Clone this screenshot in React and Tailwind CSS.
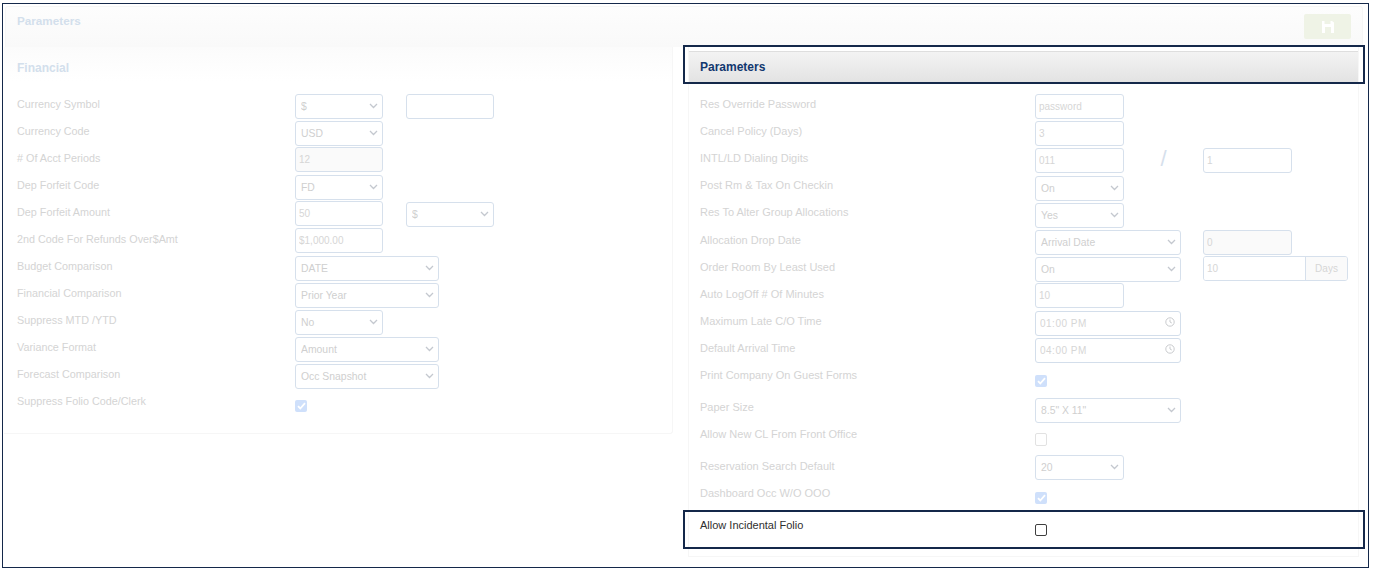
import React from "react";

const Chevron = () => (
  <svg className="absolute right-[5px] top-[10px] pointer-events-none" width="9" height="6" viewBox="0 0 9 6" fill="none" stroke="#c4c8cf" strokeWidth="1.3">
    <path d="M1 1l3.5 3.5L8 1" />
  </svg>
);

const Clock = () => (
  <svg className="absolute right-[6px] top-[7px]" width="10" height="10" viewBox="0 0 10 10" fill="none" stroke="#c9cbce" strokeWidth="1">
    <circle cx="5" cy="5" r="4.2" />
    <path d="M5 2.5V5l1.8 1" />
  </svg>
);

const Select = ({ value, w }) => (
  <div className={`relative shrink-0 h-[25px] ${w}`}>
    <select
      defaultValue={value}
      className="w-full h-full appearance-none rounded-[3px] border border-[#d6e0ec] bg-white pl-[5px] text-[10.4px] text-[#cfcfcf] outline-none"
    >
      <option>{value}</option>
    </select>
    <Chevron />
  </div>
);

const Input = ({ value, w, disabled, grey }) => (
  <input
    readOnly
    disabled={disabled}
    value={value || ""}
    className={`shrink-0 h-[25px] ${w} rounded-[3px] border border-[#d6e0ec] ${grey ? "bg-[#fafafa]" : "bg-white"} pl-[3px] text-[10px] text-[#d6d6d6] outline-none`}
  />
);

const Time = ({ value }) => (
  <div className="relative shrink-0 h-[25px] w-[146px]">
    <input
      readOnly
      value={value}
      className="w-full h-full rounded-[3px] border border-[#d3deeb] bg-white pl-[4px] text-[10px] tracking-[0.5px] text-[#d6d6d6] outline-none"
    />
    <Clock />
  </div>
);

const Check = ({ on, mt }) =>
  on ? (
    <span className={`flex items-center justify-center shrink-0 w-[12px] h-[12px] rounded-[2px] bg-[#cfe0fb] ${mt}`}>
      <svg width="9" height="8" viewBox="0 0 9 8" fill="none" stroke="#fff" strokeWidth="1.8">
        <path d="M1 4.2l2.3 2.3L8 1.2" />
      </svg>
    </span>
  ) : (
    <span className={`block shrink-0 w-[12px] h-[13px] rounded-[2px] border border-[#e2e2e2] bg-white ${mt}`} />
  );

const Row = ({ label, h = "h-[27px]", lt = "mt-[3px]", labelW, size = "text-[11px]", children, dark }) => (
  <div className={`flex items-start ${h}`}>
    <div className={`shrink-0 ${labelW} ${lt} ${size} leading-[14px] ${dark ? "text-[#2f2f2f]" : "text-[#d4d4d4]"}`}>
      {label}
    </div>
    {children}
  </div>
);

const LRow = (props) => <Row labelW="w-[278px]" lt="mt-[4px]" size="text-[10.8px]" {...props} />;
const RRow = (props) => <Row labelW="w-[335px]" {...props} />;

export default function App() {
  return (
    <div className="w-[1373px] h-[572px] bg-white pl-[2px] pt-[3px] font-['Liberation_Sans',Arial,sans-serif] overflow-hidden">
      <div className="relative w-[1367px] h-[565px] border border-[#14284a] pl-[2px] pt-[2px]">
        <div className="flex justify-between w-[1358px] h-[41px] rounded-t-[3px] border border-b-0 border-[#f6f6f6] bg-gradient-to-b from-[#fdfdfd] to-[#f9f9f9]">
          <span className="ml-[11px] mt-[7px] text-[11.7px] leading-[14px] font-bold text-[#d3dfec]">Parameters</span>
          <button className="flex items-center justify-center mt-[7px] mr-[11px] w-[47px] h-[25px] rounded-[2px] bg-[#eff3e6]">
            <svg width="12" height="12" viewBox="0 0 12 12" fill="#fff">
              <path d="M0 0h2.5v3h6V0H10l2 1.5V12H9V6H3v6H0z" />
            </svg>
          </button>
        </div>

        <div className="flex items-start">
          <section className="w-[669px] -ml-[1px] h-[387px] border-b border-r border-[#f6f6f6] rounded-br-[3px]">
            <h2 className="h-[34px] pl-[13px] pt-[14px] text-[12px] leading-[14px] font-bold text-[#d3dfec] bg-gradient-to-b from-[#fbfbfb] to-white">
              Financial
            </h2>
            <div className="pl-[13px] pt-[12px]">
              <LRow label="Currency Symbol">
                <Select value="$" w="w-[88px]" />
                <div className="ml-[23px]"><Input w="w-[88px]" /></div>
              </LRow>
              <LRow label="Currency Code"><Select value="USD" w="w-[88px]" /></LRow>
              <LRow label="# Of Acct Periods"><Input value="12" w="w-[88px]" grey /></LRow>
              <LRow label="Dep Forfeit Code"><Select value="FD" w="w-[88px]" /></LRow>
              <LRow label="Dep Forfeit Amount">
                <Input value="50" w="w-[88px]" />
                <div className="ml-[23px]"><Select value="$" w="w-[88px]" /></div>
              </LRow>
              <LRow label="2nd Code For Refunds Over$Amt"><Input value="$1,000.00" w="w-[88px]" /></LRow>
              <LRow label="Budget Comparison"><Select value="DATE" w="w-[144px]" /></LRow>
              <LRow label="Financial Comparison"><Select value="Prior Year" w="w-[144px]" /></LRow>
              <LRow label="Suppress MTD /YTD"><Select value="No" w="w-[88px]" /></LRow>
              <LRow label="Variance Format"><Select value="Amount" w="w-[144px]" /></LRow>
              <LRow label="Forecast Comparison"><Select value="Occ Snapshot" w="w-[144px]" /></LRow>
              <LRow label="Suppress Folio Code/Clerk"><Check on mt="mt-[10px]" /></LRow>
            </div>
          </section>

          <section className="relative ml-[15px] w-[671px] h-[510px] border border-t-0 border-[#f6f6f6]">
            <h2 className="h-[31px] mt-[4px] pl-[11px] pt-[8px] text-[12px] leading-[14px] font-bold text-[#12386f] bg-gradient-to-b from-[#f3f3f3] to-[#e3e3e3] border-t border-[#dedede]">
              Parameters
            </h2>
            <div className="pl-[11px] pt-[12px]">
              <RRow label="Res Override Password"><Input value="password" w="w-[89px]" /></RRow>
              <RRow label="Cancel Policy (Days)"><Input value="3" w="w-[89px]" /></RRow>
              <RRow label="INTL/LD Dialing Digits">
                <Input value="011" w="w-[89px]" />
                <span className="w-[79px] text-center font-light text-[22px] leading-[22px] text-[#d6e0ec]">/</span>
                <Input value="1" w="w-[89px]" />
              </RRow>
              <RRow label="Post Rm & Tax On Checkin"><Select value="On" w="w-[89px]" /></RRow>
              <RRow label="Res To Alter Group Allocations"><Select value="Yes" w="w-[89px]" /></RRow>
              <RRow lt="mt-[4px]" label="Allocation Drop Date">
                <Select value="Arrival Date" w="w-[146px]" />
                <div className="ml-[22px]"><Input value="0" w="w-[89px]" grey /></div>
              </RRow>
              <RRow lt="mt-[4px]" label="Order Room By Least Used">
                <Select value="On" w="w-[146px]" />
                <div className="ml-[22px] flex h-[25px] w-[145px] rounded-[3px] border border-[#d6e0ec] overflow-hidden">
                  <input readOnly value="10" className="w-[102px] pl-[3px] text-[10px] text-[#d6d6d6] bg-white outline-none border-r border-[#d6e0ec]" />
                  <span className="flex-1 flex items-center justify-center text-[10px] text-[#d6d6d6] bg-[#fafafa]">Days</span>
                </div>
              </RRow>
              <RRow lt="mt-[4px]" label="Auto LogOff # Of Minutes"><Input value="10" w="w-[89px]" /></RRow>
              <RRow lt="mt-[4px]" label="Maximum Late C/O Time"><Time value="01:00 PM" /></RRow>
              <RRow lt="mt-[4px]" label="Default Arrival Time"><Time value="04:00 PM" /></RRow>
              <RRow h="h-[33px]" lt="mt-[4px]" label="Print Company On Guest Forms"><Check on mt="mt-[11px]" /></RRow>
              <RRow label="Paper Size"><Select value={'8.5" X 11"'} w="w-[146px]" /></RRow>
              <RRow h="h-[30px]" label="Allow New CL From Front Office"><Check mt="mt-[9px]" /></RRow>
              <RRow lt="mt-[5px]" label="Reservation Search Default"><Select value="20" w="w-[89px]" /></RRow>
              <RRow h="h-[32px]" lt="mt-[5px]" label="Dashboard Occ W/O OOO"><Check on mt="mt-[11px]" /></RRow>
              <RRow h="h-[36px]" lt="mt-[5px]" dark label="Allow Incidental Folio">
                <span className="block shrink-0 mt-[11px] w-[12px] h-[12px] rounded-[2px] border border-[#3f3f3f] bg-white" />
              </RRow>
            </div>
            <div className="absolute -left-[6px] -right-[7px] top-[-2px] h-[39px] border-2 border-[#14284a]" />
            <div className="absolute -left-[6px] -right-[7px] top-[463px] h-[39px] border-2 border-[#14284a]" />
          </section>
        </div>
      </div>
    </div>
  );
}
